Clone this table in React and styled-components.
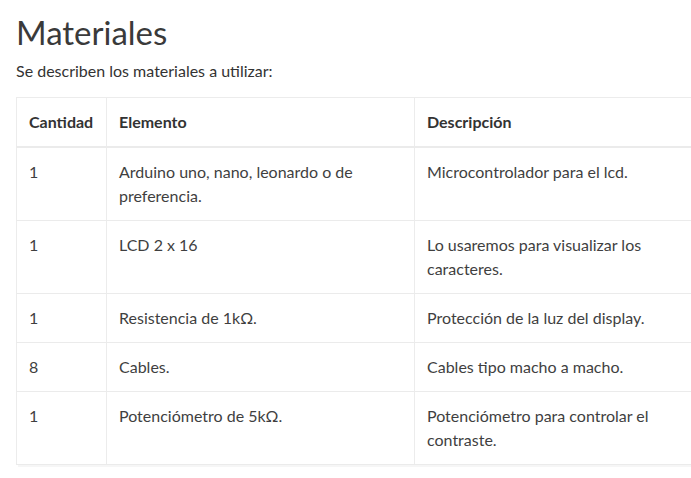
import React from 'react';
import styled, { createGlobalStyle } from 'styled-components';

const GlobalStyle = createGlobalStyle`
  html, body {
    margin: 0;
    padding: 0;
    background-color: white;
    overflow: hidden;
  }
`;

const StyledPage = styled.div`
  width: 691px;
  height: 478px;
  overflow: hidden;
  padding: 14px 0 0 16px;
  box-sizing: border-box;
  font-family: Lato, "Open Sans", sans-serif;
  color: #3f3f3f;
`;

const StyledTitle = styled.h1`
  margin: 0 0 9px 0;
  font-size: 33px;
  line-height: 36px;
  font-weight: 400;
  color: #3a3a3a;
`;

const StyledLead = styled.p`
  margin: 0 0 14px 0;
  font-size: 16px;
  line-height: 24px;
  color: #333;
`;

const StyledTable = styled.table`
  border-collapse: collapse;
  width: 700px;
  table-layout: fixed;
  font-size: 16px;
  line-height: 24px;
  border: 1px solid #ececec;
  box-shadow: 0 4px 0 -2px #f6f6f6;
`;

const StyledHeadCell = styled.th`
  text-align: left;
  font-weight: 700;
  color: #333;
  padding: 12px 12px;
  border-right: 1px solid #ececec;
  border-bottom: 2px solid #ebebeb;
`;

const StyledCell = styled.td`
  vertical-align: top;
  padding: 12px 12px;
  border-right: 1px solid #ececec;
  border-bottom: 1px solid #ebebeb;
`;

const materials = [
    { qty: '1', item: 'Arduino uno, nano, leonardo o de preferencia.', desc: 'Microcontrolador para el lcd.' },
    { qty: '1', item: 'LCD 2 x 16', desc: 'Lo usaremos para visualizar los caracteres.' },
    { qty: '1', item: 'Resistencia de 1kΩ.', desc: 'Protección de la luz del display.' },
    { qty: '8', item: 'Cables.', desc: 'Cables tipo macho a macho.' },
    { qty: '1', item: 'Potenciómetro de 5kΩ.', desc: 'Potenciómetro para controlar el contraste.' },
];

const App = () => {
    return (
        <StyledPage>
            <GlobalStyle />
            <StyledTitle>Materiales</StyledTitle>
            <StyledLead>Se describen los materiales a utilizar:</StyledLead>
            <StyledTable>
                <colgroup>
                    <col style={{ width: 90 }} />
                    <col style={{ width: 308 }} />
                    <col />
                </colgroup>
                <thead>
                    <tr>
                        <StyledHeadCell>Cantidad</StyledHeadCell>
                        <StyledHeadCell>Elemento</StyledHeadCell>
                        <StyledHeadCell>Descripción</StyledHeadCell>
                    </tr>
                </thead>
                <tbody>
                    {materials.map((row, i) => (
                        <tr key={i}>
                            <StyledCell>{row.qty}</StyledCell>
                            <StyledCell>{row.item}</StyledCell>
                            <StyledCell>{row.desc}</StyledCell>
                        </tr>
                    ))}
                </tbody>
            </StyledTable>
        </StyledPage>
    );
};

export default App;
